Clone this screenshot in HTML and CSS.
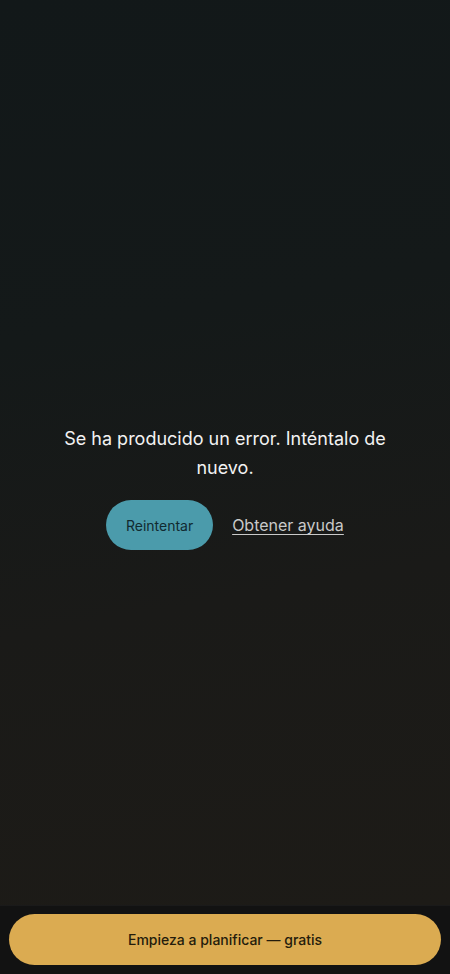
FILE: index.html
```html
<!DOCTYPE html>
<html lang="es">
<head>
<meta charset="utf-8">
<meta name="viewport" content="width=device-width, initial-scale=1">
<link rel="stylesheet" href="styles.css">
</head>
<body>
<div class="page">
  <main class="main">
    <div class="error">
      <p class="message">Se ha producido un error. Inténtalo de nuevo.</p>
      <div class="actions">
        <button class="retry">Reintentar</button>
        <a class="help" href="#">Obtener ayuda</a>
      </div>
    </div>
  </main>
  <footer class="footer">
    <button class="cta">Empieza a planificar — gratis</button>
  </footer>
</div>
</body>
</html>
```
FILE: styles.css
```css
html, body {
  margin: 0;
  padding: 0;
  height: 100%;
}
body {
  font-family: Inter, "Noto Sans", "Liberation Sans", sans-serif;
  background: #121212;
}
.page {
  height: 974px;
  display: flex;
  flex-direction: column;
}
.main {
  flex: 1;
  display: flex;
  flex-direction: column;
  align-items: center;
  padding-top: 424px;
  box-sizing: border-box;
  background: linear-gradient(170deg, #121819 0%, #141919 35%, #1a1a18 65%, #1d1b17 100%);
}
.error {
  width: 340px;
  display: flex;
  flex-direction: column;
  align-items: center;
}
.message {
  margin: 0;
  color: #f2f2f2;
  font-size: 18px;
  line-height: 29px;
  text-align: center;
}
.actions {
  margin-top: 18px;
  display: flex;
  align-items: center;
  gap: 19px;
}
.retry {
  width: 107px;
  height: 50px;
  border: none;
  border-radius: 25px;
  background: #4b9bab;
  color: #112a30;
  font-family: inherit;
  font-size: 14px;
  padding: 0;
}
.help {
  color: #c9c9c9;
  font-size: 16px;
  text-decoration: underline;
  text-underline-offset: 3px;
}
.footer {
  height: 69px;
  padding: 8px 9px 9px;
  box-sizing: border-box;
  background: #121212;
  border-top: 1px solid #1a1a1a;
}
.cta {
  width: 100%;
  height: 51px;
  border: none;
  border-radius: 26px;
  background: #dbab51;
  color: #241c0c;
  font-family: inherit;
  font-size: 14px;
  font-weight: 500;
  padding: 0;
}
```
